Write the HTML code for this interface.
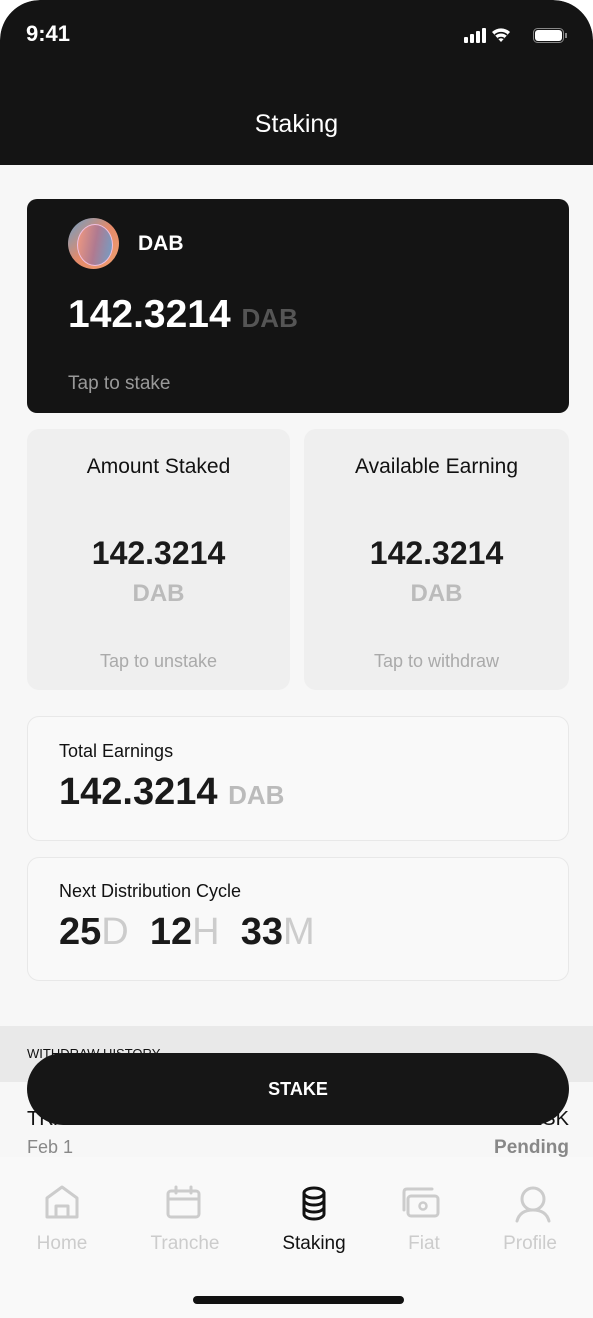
<!DOCTYPE html><html><head><style>
*{margin:0;padding:0;box-sizing:border-box}
body{width:593px;height:1318px;overflow:hidden;background:#fff;font-family:"Liberation Sans",sans-serif;position:relative}
.ph{position:absolute;left:0;top:0;width:593px;height:1318px;background:#f7f7f7;border-radius:40px 40px 0 0;overflow:hidden}
.hd{position:absolute;left:0;top:0;width:593px;height:165px;background:#141414;border-radius:40px 40px 0 0}
.a{position:absolute}
.c{position:absolute;text-align:center}
</style></head><body><div class="ph">
<div class="hd"></div>
<div class="a" style="left:26px;top:21px;color:#fff;font-size:22px;font-weight:bold">9:41</div>
<svg class="a" style="left:464px;top:26px" width="108" height="20" viewBox="0 0 108 20">
<rect x="0" y="11" width="4" height="6" rx="1" fill="#fff"/><rect x="6" y="8" width="4" height="9" rx="1" fill="#fff"/><rect x="12" y="5" width="4" height="12" rx="1" fill="#fff"/><rect x="18" y="2" width="4" height="15" rx="1" fill="#fff"/>
<path d="M37 16 L28 6 A13 13 0 0 1 46 6 Z" fill="#fff"/><path d="M31 9 A9 9 0 0 1 43 9" stroke="#141414" stroke-width="1.6" fill="none"/><path d="M34 12.5 A5 5 0 0 1 40 12.5" stroke="#141414" stroke-width="1.6" fill="none"/>
<rect x="69.5" y="2.5" width="30" height="14" rx="4" stroke="#888" fill="none"/><rect x="71" y="4" width="27" height="11" rx="3" fill="#fff"/><rect x="101" y="7" width="2" height="5" fill="#888"/></svg>
<div class="c" style="left:0;width:593px;top:110px;color:#fff;font-size:25px">Staking</div>

<div class="a" style="left:27px;top:199px;width:542px;height:214px;background:#141414;border-radius:10px"></div>
<div class="a" style="left:68px;top:218px;width:51px;height:51px;border-radius:50%;background:linear-gradient(135deg,#6aa0c8,#e48a6a,#f0a070)"></div>
<div class="a" style="left:77px;top:224px;width:36px;height:42px;border-radius:50%;background:linear-gradient(100deg,#f29a80,#b07a90,#70a0c8);border:1px solid #f0c0e0"></div>
<div class="a" style="left:138px;top:232px;color:#fff;font-size:21px;font-weight:bold">DAB</div>
<div class="a" style="left:68px;top:293px;color:#fff;font-size:39px;font-weight:bold">142.3214 <span style="color:#555;font-size:26px">DAB</span></div>
<div class="a" style="left:68px;top:373px;color:#999;font-size:19px">Tap to stake</div>

<div class="a" style="left:27px;top:429px;width:263px;height:261px;background:#efefef;border-radius:12px"></div>
<div class="a" style="left:304px;top:429px;width:265px;height:261px;background:#efefef;border-radius:12px"></div>
<div class="c" style="left:27px;width:263px;top:455px;font-size:21px;color:#111">Amount Staked</div>
<div class="c" style="left:304px;width:265px;top:455px;font-size:21px;color:#111">Available Earning</div>
<div class="c" style="left:27px;width:263px;top:535px;font-size:32px;font-weight:bold;color:#1a1a1a">142.3214</div>
<div class="c" style="left:304px;width:265px;top:535px;font-size:32px;font-weight:bold;color:#1a1a1a">142.3214</div>
<div class="c" style="left:27px;width:263px;top:580px;font-size:24px;font-weight:bold;color:#bbb">DAB</div>
<div class="c" style="left:304px;width:265px;top:580px;font-size:24px;font-weight:bold;color:#bbb">DAB</div>
<div class="c" style="left:27px;width:263px;top:651px;font-size:18px;color:#aaa">Tap to unstake</div>
<div class="c" style="left:304px;width:265px;top:651px;font-size:18px;color:#aaa">Tap to withdraw</div>

<div class="a" style="left:27px;top:716px;width:542px;height:125px;background:#f9f9f9;border:1px solid #e8e8e8;border-radius:12px"></div>
<div class="a" style="left:59px;top:741px;font-size:18px;color:#111">Total Earnings</div>
<div class="a" style="left:59px;top:771px;font-size:38px;font-weight:bold;color:#1a1a1a">142.3214 <span style="color:#bbb;font-size:26px">DAB</span></div>
<div class="a" style="left:27px;top:857px;width:542px;height:124px;background:#f9f9f9;border:1px solid #e8e8e8;border-radius:12px"></div>
<div class="a" style="left:59px;top:881px;font-size:18px;color:#111">Next Distribution Cycle</div>
<div class="a" style="left:59px;top:911px;font-size:38px;font-weight:bold;color:#1a1a1a;white-space:pre">25<span style="color:#ccc;font-weight:normal">D</span>  12<span style="color:#ccc;font-weight:normal">H</span>  33<span style="color:#ccc;font-weight:normal">M</span></div>

<div class="a" style="left:0;top:1026px;width:593px;height:56px;background:#e9e9e9"></div>
<div class="a" style="left:27px;top:1046px;font-size:13px;color:#111">WITHDRAW HISTORY</div>
<div class="a" style="left:27px;top:1108px;font-size:20px;color:#111">TRX7451879056047</div>
<div class="a" style="right:24px;top:1108px;font-size:20px;color:#111">-0.10 ESK</div>
<div class="a" style="left:27px;top:1137px;font-size:18px;color:#888">Feb 1</div>
<div class="a" style="right:24px;top:1137px;font-size:19px;color:#888;font-weight:bold">Pending</div>
<div class="a" style="left:27px;top:1053px;width:542px;height:72px;background:#161616;border-radius:36px;color:#fff;font-size:18px;font-weight:bold;text-align:center;line-height:72px">STAKE</div>

<div class="a" style="left:0;top:1157px;width:593px;height:161px;background:#f9f9f9"></div>
<svg class="a" style="left:0;top:1185px" width="593" height="40" viewBox="0 0 593 40" fill="none" stroke-linecap="round" stroke-linejoin="round">
<path d="M47 13 L62 2 L77 13 V32 H47 Z M56 32 V21 H68 V32" stroke="#ccc" stroke-width="3"/>
<rect x="168" y="6" width="31" height="26" rx="3" stroke="#ccc" stroke-width="3"/><path d="M168 14 H199 M176 2 V8 M191 2 V8" stroke="#ccc" stroke-width="3"/>
<ellipse cx="314" cy="8" rx="10" ry="5" stroke="#111" stroke-width="3"/><path d="M304 8 V29 A10 5 0 0 0 324 29 V8 M304 15 A10 5 0 0 0 324 15 M304 22 A10 5 0 0 0 324 22" stroke="#111" stroke-width="3"/>
<rect x="408" y="11" width="30" height="20" rx="3" stroke="#ccc" stroke-width="3"/><path d="M404 25 V7 Q404 4 407 4 H432" stroke="#ccc" stroke-width="3"/><circle cx="423" cy="21" r="3.5" stroke="#ccc" stroke-width="2.5"/>
<circle cx="533" cy="14" r="11" stroke="#ccc" stroke-width="3"/><path d="M517 36 Q520 25 533 25 Q546 25 549 36" stroke="#ccc" stroke-width="3"/>
</svg>
<div class="c" style="left:22px;width:80px;top:1233px;font-size:19px;color:#ccc">Home</div>
<div class="c" style="left:135px;width:100px;top:1233px;font-size:19px;color:#ccc">Tranche</div>
<div class="c" style="left:264px;width:100px;top:1233px;font-size:19px;color:#111">Staking</div>
<div class="c" style="left:384px;width:80px;top:1233px;font-size:19px;color:#ccc">Fiat</div>
<div class="c" style="left:490px;width:80px;top:1233px;font-size:19px;color:#ccc">Profile</div>
<div class="a" style="left:193px;top:1296px;width:211px;height:8px;background:#111;border-radius:4px"></div>
</div></body></html>
